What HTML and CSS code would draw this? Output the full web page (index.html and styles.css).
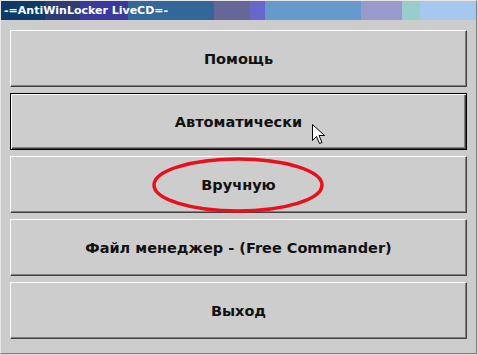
FILE: index.html
```html
<!DOCTYPE html>
<html lang="ru">
<head>
  <meta charset="UTF-8" />
  <title>AntiWinLocker LiveCD</title>
  <link rel="stylesheet" href="styles.css">
</head>
<body>
  <div class="window">
    <div class="titlebar">
      <div class="stripes">
        <span class="s1"></span><span class="s2"></span><span class="s3"></span><span class="s4"></span><span class="s5"></span>
        <span class="s6"></span><span class="s7"></span><span class="s8"></span><span class="s9"></span><span class="s10"></span>
      </div>
      <div class="title">-=AntiWinLocker LiveCD=-</div>
    </div>
    <div class="menu">
      <button class="btn">Помощь</button>
      <button class="btn focused">Автоматически</button>
      <button class="btn">Вручную</button>
      <button class="btn">Файл менеджер - (Free Commander)</button>
      <button class="btn">Выход</button>
    </div>
    <svg class="ring" width="174" height="58" viewBox="0 0 174 58">
      <ellipse cx="87" cy="29" rx="84" ry="26" fill="none" stroke="#e8101a" stroke-width="3.5"/>
    </svg>
    <svg class="cursor" width="14" height="22" viewBox="0 0 14 22">
      <path d="M0.5 0.5 L0.5 16.5 L4.5 12.5 L7.5 19.5 L10 18.5 L7 11.5 L12.5 11.5 Z" fill="#fff" stroke="#000" stroke-width="1"/>
    </svg>
  </div>
</body>
</html>
```

FILE: styles.css
```css
* { box-sizing: border-box; margin: 0; padding: 0; }
body {
  background: #d8d8d8;
  width: 478px;
  height: 355px;
  overflow: hidden;
}
.window {
  position: relative;
  width: 477px;
  height: 354px;
  background: #cccccc;
  border-top: 1px solid #e6e6e6;
  border-left: 1px solid #e6e6e6;
  border-right: 1px solid #808080;
  border-bottom: 1px solid #808080;
}
.titlebar {
  position: relative;
  height: 19px;
}
.stripes { display: flex; height: 100%; }
.stripes span { display: block; height: 100%; }
.s1 { width: 44px; background: #0d3a68; }
.s2 { width: 35px; background: #2e3b74; }
.s3 { width: 48px; background: #3a3a9c; }
.s4 { width: 86px; background: #336699; }
.s5 { width: 36px; background: #666699; }
.s6 { width: 15px; background: #6666cc; }
.s7 { width: 96px; background: #6699cc; }
.s8 { width: 41px; background: #9999cc; }
.s9 { width: 18px; background: #99cccc; }
.s10 { flex: 1; background: #a6c8ee; }
.title {
  position: absolute;
  left: 3px;
  top: 0;
  font: bold 11px "DejaVu Sans", sans-serif;
  line-height: 19px;
  color: #fff;
}
.menu {
  display: flex;
  flex-direction: column;
  gap: 6px;
  padding: 10px 9px 0 9px;
}
.btn {
  height: 57px;
  background: #cdcdcd;
  border: 1px solid;
  border-color: #ffffff #404040 #404040 #ffffff;
  box-shadow: inset -1px -1px #808080;
  font: bold 14.5px "DejaVu Sans", sans-serif;
  color: #111;
  text-align: center;
}
.btn.focused {
  border-color: #000;
  box-shadow: inset 1px 1px #ffffff, inset -1px -1px #404040, inset -2px -2px #808080;
}
.ring {
  position: absolute;
  left: 150px;
  top: 155px;
}
.cursor {
  position: absolute;
  left: 311px;
  top: 123px;
}
```
